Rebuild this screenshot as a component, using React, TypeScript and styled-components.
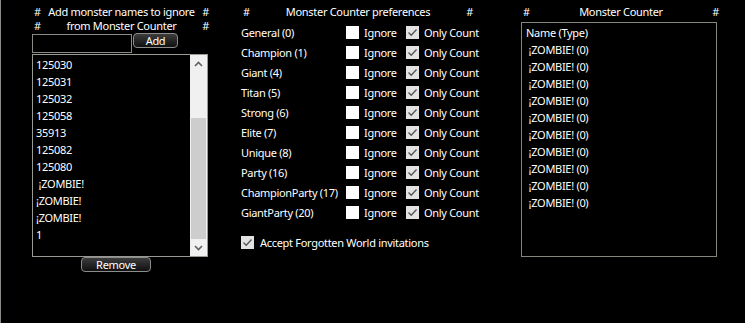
import React from 'react'
import styled, { createGlobalStyle } from 'styled-components'

const Global = createGlobalStyle`
  html, body {
    margin: 0;
    padding: 0;
    background: #000;
  }
  body {
    font-family: "Noto Sans", "Open Sans", sans-serif;
    font-size: 11px;
    letter-spacing: -0.3px;
    color: #fff;
  }
`

const Window = styled.div`
  width: 745px;
  height: 323px;
  box-sizing: border-box;
  border-left: 1px solid #8a8a84;
  background: #000;
  display: flex;
  align-items: flex-start;
  padding-top: 5px;
`

const Column = styled.div<{ $left: number; $width: number }>`
  margin-left: ${p => p.$left}px;
  width: ${p => p.$width}px;
  display: flex;
  flex-direction: column;
  flex-shrink: 0;
`

const Header = styled.div<{ $height?: number }>`
  display: flex;
  justify-content: space-between;
  align-items: flex-start;
  line-height: 14px;
  height: ${p => p.$height ?? 14}px;
  padding: 0 2px;
  text-align: center;
  white-space: nowrap;
`

const HeaderTitle = styled.span`
  flex: 1;
  text-align: center;
`

const InputRow = styled.div`
  display: flex;
  align-items: flex-start;
  gap: 1px;
`

const TextBox = styled.div`
  width: 100px;
  height: 19px;
  box-sizing: border-box;
  border: 1px solid #8a8a84;
  margin-top: 1px;
`

const Button = styled.button<{ $width: number }>`
  width: ${p => p.$width}px;
  height: 15px;
  padding: 0;
  box-sizing: border-box;
  border: 1px solid #8c8c8c;
  border-radius: 4px;
  background: linear-gradient(#3c3c3c, #101010);
  color: #fff;
  font-family: inherit;
  font-size: 11px;
  letter-spacing: inherit;
  line-height: 12px;
`

const ListBox = styled.div`
  margin-top: 1px;
  width: 176px;
  height: 203px;
  box-sizing: border-box;
  border: 1px solid #9a9a94;
  display: flex;
`

const ListItems = styled.div`
  flex: 1;
  padding: 1px 0 0 3px;
`

const Item = styled.div`
  height: 17px;
  line-height: 17px;
  white-space: pre;
`

const ScrollBar = styled.div`
  width: 17px;
  background: #f0f0f0;
  display: flex;
  flex-direction: column;
`

const ScrollArrow = styled.div`
  height: 17px;
  display: flex;
  align-items: center;
  justify-content: center;
`

const ScrollTrack = styled.div`
  flex: 1;
  display: flex;
  flex-direction: column;
  justify-content: flex-end;
`

const Thumb = styled.div`
  height: 121px;
  margin: 0 1px;
  background: #cdcdcd;
`

const RemoveRow = styled.div`
  padding-left: 49px;
  display: flex;
`

const PrefRow = styled.div`
  display: grid;
  grid-template-columns: 105px 60px auto;
  align-items: center;
  height: 20px;
  white-space: nowrap;
`

const CheckItem = styled.label`
  display: flex;
  align-items: center;
  gap: 5px;
`

const Box = styled.span<{ $checked: boolean }>`
  width: 13px;
  height: 13px;
  box-sizing: border-box;
  background: ${p => (p.$checked ? '#e3e3e3' : '#fff')};
  display: flex;
  align-items: center;
  justify-content: center;
  flex-shrink: 0;
`

const AcceptRow = styled.div`
  margin-top: 10px;
  height: 20px;
  display: flex;
  align-items: center;
  gap: 6px;
`

const CounterBox = styled.div`
  margin-top: 3px;
  width: 196px;
  height: 235px;
  box-sizing: border-box;
  border: 1px solid #85857d;
  padding: 1px 0 0 4px;
`

function Check(props: { checked: boolean }) {
  return (
    <Box $checked={props.checked}>
      {props.checked && (
        <svg width="11" height="11" viewBox="0 0 11 11">
          <path d="M1.5 5.5 L4.2 8.2 L9.5 2.5" fill="none" stroke="#555" strokeWidth="1.3" />
        </svg>
      )}
    </Box>
  )
}

function Chevron(props: { up: boolean }) {
  return (
    <svg width="9" height="6" viewBox="0 0 9 6">
      <path
        d={props.up ? 'M1 5 L4.5 1.5 L8 5' : 'M1 1 L4.5 4.5 L8 1'}
        fill="none"
        stroke="#606060"
        strokeWidth="1.6"
      />
    </svg>
  )
}

const ignoreList = ['125030', '125031', '125032', '125058', '35913', '125082', '125080', ' ¡ZOMBIE!', '¡ZOMBIE!', '¡ZOMBIE!', '1']

const prefs = [
  'General (0)',
  'Champion (1)',
  'Giant (4)',
  'Titan (5)',
  'Strong (6)',
  'Elite (7)',
  'Unique (8)',
  'Party (16)',
  'ChampionParty (17)',
  'GiantParty (20)',
]

const counter = Array.from({ length: 10 }, () => ' ¡ZOMBIE! (0)')

export default function App() {
  return (
    <>
      <Global />
      <Window>
        {/* ignore list */}
        <Column $left={31} $width={179}>
          <Header $height={28}>
            <span>#<br />#</span>
            <HeaderTitle>Add monster names to ignore<br />from Monster Counter</HeaderTitle>
            <span>#<br />#</span>
          </Header>
          <InputRow>
            <TextBox />
            <Button $width={45}>Add</Button>
          </InputRow>
          <ListBox>
            <ListItems>
              {ignoreList.map((name, i) => (
                <Item key={i}>{name}</Item>
              ))}
            </ListItems>
            <ScrollBar>
              <ScrollArrow><Chevron up /></ScrollArrow>
              <ScrollTrack><Thumb /></ScrollTrack>
              <ScrollArrow><Chevron up={false} /></ScrollArrow>
            </ScrollBar>
          </ListBox>
          <RemoveRow>
            <Button $width={70}>Remove</Button>
          </RemoveRow>
        </Column>

        {/* preferences */}
        <Column $left={30} $width={234}>
          <Header $height={17}>
            <span>#</span>
            <HeaderTitle>Monster Counter preferences</HeaderTitle>
            <span>#</span>
          </Header>
          {prefs.map(p => (
            <PrefRow key={p}>
              <span>{p}</span>
              <CheckItem><Check checked={false} />Ignore</CheckItem>
              <CheckItem><Check checked />Only Count</CheckItem>
            </PrefRow>
          ))}
          <AcceptRow>
            <Check checked />
            Accept Forgotten World invitations
          </AcceptRow>
        </Column>

        {/* counter */}
        <Column $left={46} $width={200}>
          <Header $height={14}>
            <span>#</span>
            <HeaderTitle>Monster Counter</HeaderTitle>
            <span>#</span>
          </Header>
          <CounterBox>
            <Item>Name (Type)</Item>
            {counter.map((c, i) => (
              <Item key={i}>{c}</Item>
            ))}
          </CounterBox>
        </Column>
      </Window>
    </>
  )
}
